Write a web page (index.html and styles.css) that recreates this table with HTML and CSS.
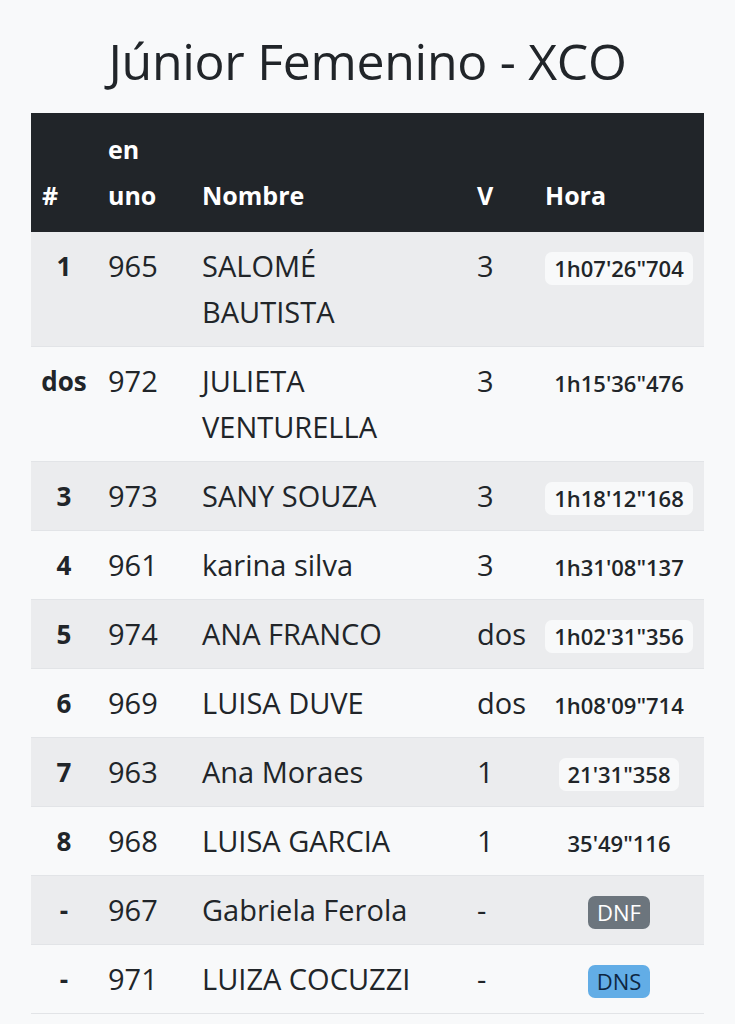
FILE: index.html
```html
<!DOCTYPE html>
<html lang="es">
<head>
<meta charset="utf-8">
<title>Júnior Femenino - XCO</title>
<link rel="stylesheet" href="styles.css">
</head>
<body>
<main class="page">
  <h1 class="title">Júnior Femenino - XCO</h1>
  <table class="results">
    <colgroup>
      <col class="c-pos"><col class="c-num"><col class="c-name"><col class="c-laps"><col class="c-time">
    </colgroup>
    <thead>
      <tr><th>#</th><th>en uno</th><th>Nombre</th><th>V</th><th>Hora</th></tr>
    </thead>
    <tbody>
      <tr><td class="pos">1</td><td>965</td><td>SALOMÉ BAUTISTA</td><td>3</td><td class="time"><span class="badge light">1h07'26"704</span></td></tr>
      <tr><td class="pos">dos</td><td>972</td><td>JULIETA VENTURELLA</td><td>3</td><td class="time"><span class="badge light">1h15'36"476</span></td></tr>
      <tr><td class="pos">3</td><td>973</td><td>SANY SOUZA</td><td>3</td><td class="time"><span class="badge light">1h18'12"168</span></td></tr>
      <tr><td class="pos">4</td><td>961</td><td>karina silva</td><td>3</td><td class="time"><span class="badge light">1h31'08"137</span></td></tr>
      <tr><td class="pos">5</td><td>974</td><td>ANA FRANCO</td><td>dos</td><td class="time"><span class="badge light">1h02'31"356</span></td></tr>
      <tr><td class="pos">6</td><td>969</td><td>LUISA DUVE</td><td>dos</td><td class="time"><span class="badge light">1h08'09"714</span></td></tr>
      <tr><td class="pos">7</td><td>963</td><td>Ana Moraes</td><td>1</td><td class="time"><span class="badge light">21'31"358</span></td></tr>
      <tr><td class="pos">8</td><td>968</td><td>LUISA GARCIA</td><td>1</td><td class="time"><span class="badge light">35'49"116</span></td></tr>
      <tr><td class="pos">-</td><td>967</td><td>Gabriela Ferola</td><td>-</td><td class="time"><span class="badge dnf">DNF</span></td></tr>
      <tr><td class="pos">-</td><td>971</td><td>LUIZA COCUZZI</td><td>-</td><td class="time"><span class="badge dns">DNS</span></td></tr>
    </tbody>
  </table>
</main>
</body>
</html>
```

FILE: styles.css
```css
html, body {
  margin: 0;
  padding: 0;
  background: #f8f9fa;
}

body {
  font-family: "Open Sans", "Noto Sans", sans-serif;
  color: #212529;
}

.page {
  padding: 0 31px;
}

.title {
  margin: 0;
  padding: 28px 0 18px;
  text-align: center;
  font-size: 50px;
  font-weight: 400;
  line-height: 67px;
  color: #212529;
  letter-spacing: -0.3px;
}

.results {
  width: 100%;
  border-collapse: collapse;
  table-layout: fixed;
  font-size: 29px;
  line-height: 46px;
}

.c-pos { width: 66px; }
.c-num { width: 94px; }
.c-name { width: 275px; }
.c-laps { width: 68px; }
.c-time { width: 170px; }

.results th {
  background: #212529;
  color: #fff;
  font-size: 25px;
  font-weight: 700;
  text-align: left;
  vertical-align: bottom;
  padding: 13px 11px 13px;
  border-bottom: 1px solid #212529;
}

.results td {
  padding: 11px 11px 11px;
  vertical-align: top;
  text-align: left;
  border-bottom: 1px solid #e2e4e7;
}

.results tbody tr:nth-child(odd) td {
  background: #ebecee;
}

.results td.pos {
  text-align: center;
  font-size: 26px;
  font-weight: 700;
  padding-left: 6px;
  padding-right: 6px;
}

.results td.time {
  text-align: center;
  padding-left: 4px;
  padding-right: 4px;
}

.badge {
  display: inline-block;
  font-size: 22px;
  font-weight: 600;
  line-height: 33px;
  padding: 0 9px;
  border-radius: 7px;
  vertical-align: middle;
  position: relative;
  top: -1px;
}

.badge.light {
  background: #f8f9fa;
  color: #212529;
}

.badge.dnf {
  background: #6c757d;
  color: #fff;
  font-weight: 400;
}

.badge.dns {
  background: #62ade6;
  color: #0d2641;
  font-weight: 400;
}
```
